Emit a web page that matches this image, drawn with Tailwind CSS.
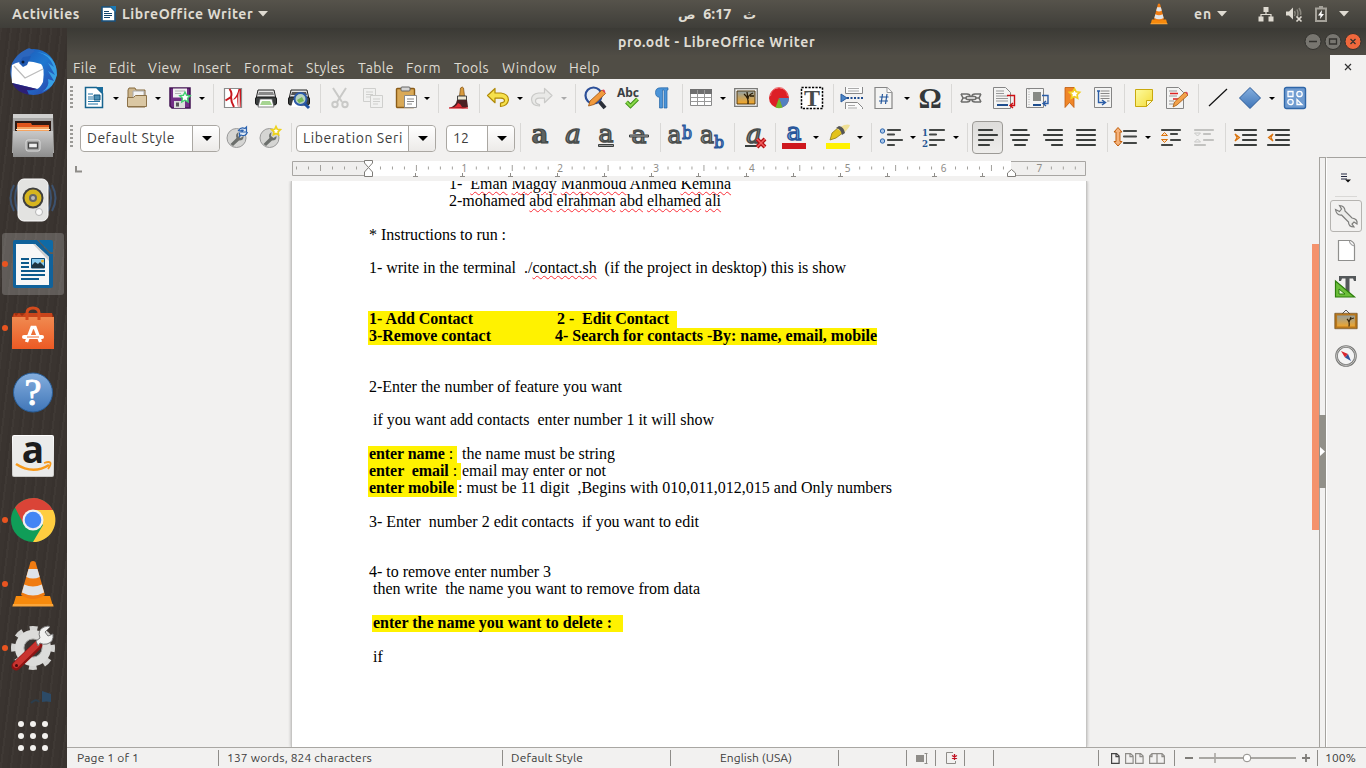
<!DOCTYPE html>
<html lang="en">
<head>
<meta charset="utf-8">
<title>pro.odt - LibreOffice Writer</title>
<script src="https://cdn.jsdelivr.net/npm/@tailwindcss/browser@4"></script>
</head>
<body class="w-[1366px] h-[768px] overflow-hidden bg-[#f2f1f0] font-['Ubuntu','Noto_Sans',sans-serif] text-[#3c3c3c] flex flex-col [&_svg]:overflow-visible">

<svg width="0" height="0" class="absolute">
  <defs>
    <linearGradient id="gray" x1="0" y1="0" x2="0" y2="1"><stop offset="0" stop-color="#fff"/><stop offset="1" stop-color="#c8c8c6"/></linearGradient>
    <linearGradient id="steel" x1="0" y1="0" x2="0" y2="1"><stop offset="0" stop-color="#c9c9c9"/><stop offset="1" stop-color="#8d8d8d"/></linearGradient>
    <linearGradient id="orange" x1="0" y1="0" x2="0" y2="1"><stop offset="0" stop-color="#f08a50"/><stop offset="1" stop-color="#ec5a24"/></linearGradient>
    <linearGradient id="blue" x1="0" y1="0" x2="0" y2="1"><stop offset="0" stop-color="#84aede"/><stop offset="1" stop-color="#4076b8"/></linearGradient>
    <linearGradient id="bird" x1="0" y1="0" x2="1" y2="1"><stop offset="0" stop-color="#1a4fb0"/><stop offset=".5" stop-color="#1f78d0"/><stop offset="1" stop-color="#2a3fa8"/></linearGradient>
    <linearGradient id="yellow" x1="0" y1="0" x2="1" y2="1"><stop offset="0" stop-color="#fdfba0"/><stop offset="1" stop-color="#f3dc3a"/></linearGradient>
    <linearGradient id="sunset" x1="0" y1="0" x2="0" y2="1"><stop offset="0" stop-color="#8fa0a8"/><stop offset="1" stop-color="#f6a623"/></linearGradient>
    <symbol id="cone" viewBox="0 0 48 48">
      <path d="M7 36h34l3 10H4z" fill="#f78a0c"/><path d="M4 44h40l.6 2.5H3.4z" fill="#fba63a"/>
      <path d="M21.500 2q2.500-2 5 0l9.500 33q-12 8-24 0z" fill="#f07c12"/>
      <path d="M19.500 9h9l2.200 8q-6.700 3-13.400 0z" fill="#dfe3e8"/><path d="M15.200 24.500q8.800 4 17.600 0l2.300 8q-11 6-22.200 0z" fill="#dfe3e8"/>
    </symbol>
    <symbol id="page" viewBox="0 0 24 24"><path d="M3 1.500h12l5 5v16H3z" fill="#f4f4f3" stroke="#858585" stroke-width="1.200"/><path d="M15 1.500v5h5" fill="#fff" stroke="#999"/></symbol>
  </defs>
</svg>

<!-- Top panel -->
<header class="h-7 shrink-0 bg-linear-to-b from-[#56534b] to-[#3f3e39] flex items-center text-[#dfdbd2] text-sm font-bold leading-none">
  <span class="ml-3 w-[68px] whitespace-pre" data-w="68">Activities</span>
  <svg class="ml-[21px] w-[15px] h-4" viewBox="0 0 15 16"><path d="M1 1h9l4 4v10H1z" fill="#fff" stroke="#17527f" stroke-width="1.600"/><path d="M9 0h6v6z" fill="#1b79b5"/><path d="M3 5.500h5M3 7.500h8M3 9.500h8M3 11.500h6" stroke="#11456e" stroke-width="1.100"/></svg>
  <span class="ml-[6px] w-[131px] whitespace-pre" data-w="131">LibreOffice Writer</span>
  <svg class="ml-[5px] w-[10px] h-[6px]" viewBox="0 0 10 6"><path d="M0 0h10L5 5.500z" fill="#dfdbd2"/></svg>
  <div class="ml-[410px] w-[78px] flex items-center justify-between font-['Ubuntu','DejaVu_Sans',sans-serif] text-[13px]" dir="ltr">
    <span>ص</span><span class="w-7 ml-[5px] whitespace-pre font-['Noto_Sans'] text-sm" data-w="28">6:17</span><span class="ml-[9px]">ث</span>
  </div>
  <svg class="ml-[393px] w-5 h-[22px]" viewBox="0 0 48 48" preserveAspectRatio="none"><use href="#cone"/></svg>
  <span class="ml-[25px] w-[18px] whitespace-pre" data-w="18">en</span>
  <svg class="ml-[5px] w-[10px] h-[6px]" viewBox="0 0 10 6"><path d="M0 0h10L5 5.500z" fill="#dfdbd2"/></svg>
  <svg class="ml-[31px] w-4 h-4" viewBox="0 0 16 16"><path d="M5.500 1h5v5h-5zM.5 10.500h5v5h-5zM10.500 10.500h5v5h-5z" fill="#dfdbd2"/><path d="M8 5v3.500M3 11V8.500h10V11" fill="none" stroke="#dfdbd2" stroke-width="1.200"/></svg>
  <svg class="ml-[11px] w-[18px] h-4" viewBox="0 0 18 16"><path d="M1 5.500h3l4-4v12l-4-4H1z" fill="#dfdbd2"/><path d="M9.500 5q1.500 2.500 0 5M12 3.500q2 4 0 7.500M14 2q2.500 4 1.500 7" fill="none" stroke="#8a877e" stroke-width="1.500"/><path d="M11.500 10.500l5 5m0-5l-5 5" stroke="#dfdbd2" stroke-width="1.700"/></svg>
  <svg class="ml-[12px] w-3 h-4" viewBox="0 0 12 16"><path d="M1 2.500h10v12.500H1z" fill="none" stroke="#a5a29a" stroke-width="2"/><path d="M4 0h4v2H4z" fill="#a5a29a"/><path d="M7 4L3 9.500h2.500L5 13l4-5H6.500z" fill="#fff"/></svg>
  <svg class="ml-[12px] w-[10px] h-[6px]" viewBox="0 0 10 6"><path d="M0 0h10L5 5.500z" fill="#dfdbd2"/></svg>
</header>

<div class="flex flex-1 min-h-0">
  <!-- Launcher -->
  <nav class="w-[67px] shrink-0 bg-[#3a3430] bg-[repeating-linear-gradient(97deg,rgba(255,255,240,0.025)_0_2px,transparent_2px_7px,rgba(0,0,0,0.04)_7px_10px)] flex flex-col items-center pt-3 pr-px">
    <div class="h-16 w-full flex justify-center items-center">
      <svg class="w-12 h-12" viewBox="0 0 48 48"><circle cx="24.500" cy="24" r="23" fill="url(#bird)"/><path d="M16 2q4-3 6-1l4 2q-8 5-9 13l-8 2q-6 6-7 11-2-12 4-18 4-6 10-9z" fill="#2c66bd"/><path d="M28 4q12 2 17 15l-6-4 7 12-7-4 6 10-6-2q2 8-6 13 12-4 15-17 0-20-20-23z" fill="#37a0e4"/><path d="M3 17q12-7 29-1 4 3 2 18-3 6-6 7L3 35q-1-10 0-18z" fill="#fff"/><path d="M5 18l11 12 18-9" fill="none" stroke="#bbb" stroke-width="1.200"/><path d="M3 35l25 6q-6 2-10 1l2 5Q7 44 3 35z" fill="#2c1f77"/><path d="M10 15l4-6 8-1-4 9-4 2z" fill="#215bb4"/><circle cx="14" cy="14" r="1.500" fill="#0a1c3a"/></svg>
    </div>
    <div class="h-16 w-full flex justify-center items-center">
      <svg class="w-12 h-12" viewBox="0 0 48 48"><path d="M4 2h40l1 39H3z" fill="#a9a9a8"/><path d="M4 2h40v4H4z" fill="#cfcfce"/><path d="M6 9h36v13H6z" fill="#2d1a14"/><path d="M8 11h14l1 2h17v8H8z" fill="#e0551c"/><path d="M8 15h32v5H8z" fill="#f5a35f"/><path d="M7 17h34v1H7z" fill="#ffe7cc"/><path d="M4 19h40v26H4z" fill="url(#steel)"/><rect x="17" y="28" width="14" height="11" rx="2" fill="#a0a0a0" stroke="#ddd"/><rect x="19.500" y="31" width="9" height="5" fill="#eee" stroke="#444" stroke-width="1.300"/></svg>
    </div>
    <div class="h-16 w-full flex justify-center items-center">
      <svg class="w-12 h-12" viewBox="0 0 48 48"><path d="M5 9q-7 13 0 26M9 9q-6 13 0 26M43 9q7 13 0 26M39 9q6 13 0 26" fill="none" stroke="#3c526f" stroke-width="2"/><rect x="9" y="3" width="30" height="42" rx="6" fill="#e3e3e1" stroke="#fafafa"/><circle cx="24" cy="22" r="10.500" fill="#3f3f3d"/><circle cx="24" cy="22" r="8.500" fill="#d6b51e"/><circle cx="24" cy="22" r="4" fill="#666"/><circle cx="24" cy="22" r="2" fill="#bbb"/><circle cx="30" cy="36" r="3.500" fill="#f9f9f9" stroke="#b4b4b4"/></svg>
    </div>
    <div class="h-16 w-full flex items-center">
      <div class="ml-[2px] w-[62px] h-[62px] shrink-0 rounded-[3px] bg-white/20 flex items-center">
        <span class="w-[6px] h-[6px] rounded-full bg-[#e95420] shrink-0"></span>
        <svg class="ml-px w-12 h-12" viewBox="0 0 48 48"><path d="M6 0h22l14 15v31q0 2-2 2H6q-2 0-2-2V2q0-2 2-2z" fill="#10629b"/><path d="M30 0h12q2 0 2 2v10q-3 1-5-2L32 3q-1-1-2-3z" fill="#0f6aa6"/><path d="M38 14h6v32q0 2-2 2h-6z" fill="#10629b"/><path d="M7 4h19l14 13v28H7z" fill="#f7f7f7"/><path d="M26 4v0l14 13v4L24 4z" fill="#ccc"/><path d="M12 19h8M12 23h8M12 27h8M12 31h24M12 35h24M12 39h18" stroke="#0d5a8c" stroke-width="1.900"/><path d="M22.500 18.500h13v9.500h-13z" fill="#8ccbee" stroke="#0c4c7a"/><path d="M23 28v-3l3-3 3 2 2-2 4 4v2z" fill="#1f3440"/><circle cx="33.500" cy="21" r="1.500" fill="#f0b429"/></svg>
      </div>
    </div>
    <div class="h-16 w-full flex items-center">
      <span class="ml-[2px] w-[6px] h-[6px] rounded-full bg-[#e95420]"></span>
      <svg class="ml-px w-12 h-12" viewBox="0 0 48 48"><path d="M5 9h38l2 4H3z" fill="#9c3010"/><path d="M5 9l2 3 3-3 3 3 3-3h27v5H4z" fill="#c8441b"/><path d="M3 13h42v32H3z" fill="url(#orange)"/><path d="M18 16V9q0-5 6-5t6 5v7" fill="none" stroke="#d34b1d" stroke-width="3"/><path d="M17.500 38L23 23.500h3L31.500 38" fill="none" stroke="#fff" stroke-width="3.400"/><path d="M15 33h18" stroke="#fff" stroke-width="4" stroke-linecap="round"/><path d="M18 33h12" stroke="#ef6a30" stroke-width="1"/></svg>
    </div>
    <div class="h-16 w-full flex justify-center items-center">
      <svg class="w-12 h-12" viewBox="0 0 48 48"><circle cx="24" cy="24.500" r="19.500" fill="url(#blue)" stroke="#285d97"/><text x="24" y="37" text-anchor="middle" font-family="Liberation Serif" font-size="38" fill="#fff" stroke="#fff" stroke-width="1">?</text></svg>
    </div>
    <div class="h-16 w-full flex justify-center items-center">
      <svg class="w-12 h-12" viewBox="0 0 48 48"><rect x="3" y="3" width="42" height="42" rx="2" fill="url(#gray)"/><rect x="4" y="4" width="40" height="40" rx="1" fill="#ebebea"/><text x="24" y="31" text-anchor="middle" font-family="Open Sans" font-weight="bold" font-size="37" fill="#1d1d1d">a</text><path d="M7 32q17 11 33 1" fill="none" stroke="#f79a1c" stroke-width="2.600"/><path d="M35 31q6-2 6.500 0t-2.500 6" fill="none" stroke="#f79a1c" stroke-width="1.800"/></svg>
    </div>
    <div class="h-16 w-full flex items-center">
      <span class="ml-[2px] w-[6px] h-[6px] rounded-full bg-[#e95420]"></span>
      <svg class="ml-px w-12 h-12" viewBox="0 0 48 48"><circle cx="24" cy="24" r="22" fill="#109d58"/><path d="M24 14h20a22 22 0 0 1-20 32l10-17z" fill="#ffcd40"/><path d="M24 14h19.700A22 22 0 0 0 6 11.500L15 29z" fill="#da4437"/><circle cx="24" cy="24" r="10.500" fill="#f1f1f1"/><circle cx="24" cy="24" r="8.300" fill="#4285f4"/></svg>
    </div>
    <div class="h-16 w-full flex items-center">
      <span class="ml-[2px] w-[6px] h-[6px] rounded-full bg-[#e95420]"></span>
      <svg class="ml-px w-12 h-12" viewBox="0 0 48 48"><use href="#cone"/></svg>
    </div>
    <div class="h-16 w-full flex items-center">
      <span class="ml-[2px] w-[6px] h-[6px] rounded-full bg-[#e95420]"></span>
      <svg class="ml-px w-12 h-12" viewBox="0 0 48 48"><circle cx="24" cy="24" r="19.500" fill="none" stroke="#d4d4d2" stroke-width="5" stroke-dasharray="7.800 7.515" stroke-dashoffset="3.900"/><circle cx="24" cy="24" r="13.500" fill="none" stroke="#dcdcda" stroke-width="9"/><circle cx="24" cy="24" r="9" fill="none" stroke="#9a9a98" stroke-width="1"/><path d="M7 42L29 21" stroke="#8d1413" stroke-width="9" stroke-linecap="round"/><path d="M7 41L28 20.500" stroke="#c93430" stroke-width="6" stroke-linecap="round"/><circle cx="7.500" cy="41.500" r="1.500" fill="#4a0d0c"/><path d="M27 17l4-3q-3-8 4-11 5-2 6 0l-5 5 3 4 5-2q1 8-6 10-4 1-7-1l-2 3z" fill="#f0f0ef" stroke="#777"/></svg>
    </div>
    <div class="h-[32px] w-full flex justify-center items-end"><svg class="w-12 h-7" viewBox="0 0 48 28"><path d="M33 7l9 3v8q-5-1-9 0z" fill="#2c4a66"/><path d="M22 19q5-5 8-1" fill="none" stroke="#2b3d4c" stroke-width="2"/></svg></div>
    <svg class="mt-[7px] w-[34px] h-[34px]" viewBox="0 0 34 34" fill="#f3f1ee"><circle cx="5" cy="5" r="3"/><circle cx="17" cy="5" r="3"/><circle cx="29" cy="5" r="3"/><circle cx="5" cy="17" r="3"/><circle cx="17" cy="17" r="3"/><circle cx="29" cy="17" r="3"/><circle cx="5" cy="29" r="3"/><circle cx="17" cy="29" r="3"/><circle cx="29" cy="29" r="3"/></svg>
  </nav>

  <!-- Window -->
  <main class="w-[1299px] flex flex-col">
    <div class="h-[27px] shrink-0 bg-linear-to-b from-[#3b3a35] to-[#4f4c45] flex items-center text-[#dfdbd2] font-bold text-[14px] leading-none">
      <span class="ml-[551px] w-[197px] whitespace-pre" data-w="197">pro.odt - LibreOffice Writer</span>
      <svg class="ml-[489px] w-[58px] h-[18px]" viewBox="0 0 58 18"><circle cx="9" cy="8.500" r="8" fill="#787670" stroke="#33322e"/><circle cx="29" cy="8.500" r="8" fill="#787670" stroke="#33322e"/><circle cx="49" cy="8.500" r="8" fill="#f0683c" stroke="#33322e"/><path d="M5 8.500h8M25.500 6h7v5h-7zM46.500 6l5 5m0-5l-5 5" fill="none" stroke="#33322e" stroke-width="1.300"/></svg>
    </div>
    <div class="h-6 shrink-0 bg-[#504d45] flex items-stretch text-[#dfdbd2] text-sm leading-[26px] whitespace-pre">
      <span class="ml-[6px] w-6" data-w="24">File</span><span class="ml-3 w-[27px]" data-w="27">Edit</span><span class="ml-3 w-[33px]" data-w="33">View</span><span class="ml-3 w-[38px]" data-w="38">Insert</span><span class="ml-[13px] w-[50px]" data-w="50">Format</span><span class="ml-3 w-[39px]" data-w="39">Styles</span><span class="ml-[13px] w-9" data-w="36">Table</span><span class="ml-3 w-[35px]" data-w="35">Form</span><span class="ml-[13px] w-[35px]" data-w="35">Tools</span><span class="ml-[13px] w-[55px]" data-w="55">Window</span><span class="ml-3 w-[31px]" data-w="31">Help</span>
      <div class="ml-auto w-9 bg-[#f2f1f0] flex items-center justify-center"><svg class="w-[6px] h-[6px]" viewBox="0 0 6 6"><path d="M0 0l6 6m0-6L0 6" stroke="#333" stroke-width="1.200"/></svg></div>
    </div>

    <!-- Standard toolbar -->
    <div class="h-[38px] shrink-0 flex items-center [&>svg]:shrink-0 [&>i]:shrink-0 [&>b]:shrink-0">
      <svg class="ml-[3px] w-[3px] h-6" viewBox="0 0 3 24"><path d="M1.500 0v24" stroke="#9b9a97" stroke-width="3" stroke-dasharray="2 2"/></svg>
      <svg class="ml-[9px] w-6 h-6" viewBox="0 0 24 24"><path d="M3.500 1.500h11l6 6v14h-17z" fill="#fff" stroke="#17648f" stroke-width="1.500"/><path d="M14 1h7v7z" fill="#1b6d9d"/><path d="M6 8h5M6 11h5M6 13h5M6 15.500h12M6 18h10" stroke="#2374a5" stroke-width="1.200"/><path d="M12 9h6v5h-6z" fill="#4d8fb4" stroke="#12547c"/></svg>
      <i class="ml-[7px] w-0 h-0 border-x-[3px] border-x-transparent border-t-[3px] border-t-black"></i>
      <svg class="ml-[6px] w-6 h-6" viewBox="0 0 24 24"><path d="M3 4l1-2h6l1 2h9v17H3z" fill="#cdb68d" stroke="#866b3e"/><path d="M8 5h11v8H8z" fill="#f4f4f4" stroke="#aaa"/><path d="M2.500 11.500h6l2-2h11v11h-19z" fill="#dac7a3" stroke="#8c7248"/></svg>
      <i class="ml-[6px] w-0 h-0 border-x-[3px] border-x-transparent border-t-[3px] border-t-black"></i>
      <svg class="ml-[7px] w-6 h-6" viewBox="0 0 24 24"><path d="M2 2h20v20H4l-2-2z" fill="#722f86" stroke="#431452" stroke-width="1.500"/><path d="M5 2.500h14v9H5z" fill="#f1f1f1"/><path d="M7 5h10M7 7.500h6" stroke="#b4b4b4"/><path d="M6 15h11v7H6z" fill="#ddd"/><path d="M8 16.500h3v4H8z" fill="#555"/><path d="M17 6l1.600 3.300 3.600.5-2.600 2.500.6 3.600-3.200-1.700-3.200 1.700.6-3.600-2.600-2.500 3.600-.5z" fill="#fff" stroke="#41d070" stroke-width="1.400"/></svg>
      <i class="ml-[7px] w-0 h-0 border-x-[3px] border-x-transparent border-t-[3px] border-t-black"></i>
      <b class="ml-2 w-px h-[29px] bg-[#d9d8d6]"></b>
      <svg class="ml-[7px] w-6 h-6" viewBox="0 0 24 24"><path d="M3.500 2.500h17v19h-17z" fill="#fff" stroke="#8b8b8b" stroke-width="1.200"/><path d="M8.500 3q3 4 1.500 8L4.500 14.500M10 11q0 5 3 10" fill="none" stroke="#c8171e" stroke-width="2"/><path d="M12.500 13q4-4 5-10h2.500v18h-3q-1.500-5-1-10-1.500 2-3.500 3z" fill="#c8171e"/><path d="M17 21q-1.500-9 1.500-17l1 17z" fill="#e9b5b6"/></svg>
      <svg class="ml-[9px] w-6 h-6" viewBox="0 0 24 24"><path d="M4 4h16l2 9H2z" fill="#e4e4e4" stroke="#222"/><path d="M5 6h14l1 3H4z" fill="#888"/><rect x="1.500" y="11" width="21" height="8" rx="2" fill="#3b3f3f" stroke="#161616"/><path d="M6 13h12l2 8H4z" fill="#fff" stroke="#555" stroke-width=".7"/><path d="M8 15h8l2 4H6z" fill="#a6d491"/></svg>
      <svg class="ml-[9px] w-6 h-6" viewBox="0 0 24 24"><path d="M4 4h16l2 9H2z" fill="#e4e4e4" stroke="#222"/><path d="M5 6h14l1 3H4z" fill="#555"/><rect x="1.500" y="11" width="21" height="8" rx="2" fill="#3b3f3f" stroke="#161616"/><path d="M4 21l2-7h8v7z" fill="#fff"/><path d="M18 18l4 4" stroke="#1c4fa0" stroke-width="3"/><circle cx="13.500" cy="13" r="6" fill="#b9d3c2" stroke="#2c5aa8" stroke-width="2"/><path d="M10 14l5-3 2 4-5 2z" fill="#76b956"/></svg>
      <b class="ml-[9px] w-px h-[29px] bg-[#d9d8d6]"></b>
      <svg class="ml-[7px] w-6 h-6" viewBox="0 0 24 24" fill="none" stroke="#c9c9c7"><path d="M5 2l9 14M18 2L9 16" stroke-width="2"/><circle cx="7" cy="18.500" r="2.700" stroke-width="2"/><circle cx="17" cy="18.500" r="2.700" stroke-width="2"/></svg>
      <svg class="ml-[9px] w-6 h-6" viewBox="0 0 24 24" fill="#f1f1f0" stroke="#cfcfcd"><path d="M2.500 2.500h12v13h-12z"/><path d="M5 6h7M5 8.500h7M5 11h4"/><path d="M9.500 9.500h12v12h-12z"/><path d="M12 13h7M12 15.500h7M12 18h5"/></svg>
      <svg class="ml-[9px] w-6 h-6" viewBox="0 0 24 24"><rect x="2.500" y="2.500" width="18" height="19" rx="1" fill="#d9a957" stroke="#8b5c18" stroke-width="1.400"/><rect x="7" y="1" width="9" height="4" rx="1" fill="#d5d5d5" stroke="#666"/><path d="M10.500 9.500h12v12h-12z" fill="#fff" stroke="#888"/><path d="M13 13h7M13 15.500h7M13 18h5" stroke="#888"/></svg>
      <i class="ml-[6px] w-0 h-0 border-x-[3px] border-x-transparent border-t-[3px] border-t-black"></i>
      <b class="ml-2 w-px h-[29px] bg-[#d9d8d6]"></b>
      <svg class="ml-[9px] w-6 h-6" viewBox="0 0 24 24"><path d="M12.500 2q2-2 3 0l1 8h-5z" fill="#d89b3e" stroke="#7c4f12" stroke-width=".7"/><path d="M9.500 10h9v4h-9z" fill="#eee8d5" stroke="#444"/><path d="M9 14h10l1 7q-4 2-7 1H1q7-2 8-8z" fill="#4b2022"/><path d="M10 17q3 1 4 4l-13 1q7 0 9-5z" fill="#e42b33"/><path d="M1 22h19" stroke="#d91e28" stroke-width="1.200"/></svg>
      <b class="ml-[7px] w-px h-[29px] bg-[#d9d8d6]"></b>
      <svg class="ml-[6px] w-6 h-6" viewBox="0 0 24 24"><path d="M1.500 9.500l7.500-7v4.500h6q7.500 1 7.500 7-1 6-8 6.500V17q4-.5 4-2.500 0-2-3.500-2.300H9v4.500z" fill="#f6e14c" stroke="#b08a08" stroke-width="1.200" stroke-linejoin="round"/></svg>
      <i class="ml-[7px] w-0 h-0 border-x-[3px] border-x-transparent border-t-[3px] border-t-black"></i>
      <svg class="ml-[7px] w-6 h-6" viewBox="0 0 24 24"><path d="M22 9.500l-7.500-7v4.500h-6Q1.500 8 1.500 13.500q.5 6.500 8 6.500v-1.500q-4-.5-4-3.500 0-2.500 3.500-2.800h5.500v4.500z" fill="#e9e9e7" stroke="#cacac8" stroke-width="1.200" stroke-linejoin="round"/></svg>
      <i class="ml-[7px] w-0 h-0 border-x-[3px] border-x-transparent border-t-[3px] border-t-[#aaa]"></i>
      <b class="ml-2 w-px h-[29px] bg-[#d9d8d6]"></b>
      <svg class="ml-[7px] w-6 h-6" viewBox="0 0 24 24"><path d="M16 15l6 7" stroke="#2b2f38" stroke-width="4"/><circle cx="10.500" cy="9.500" r="8" fill="#e7ecf2" stroke="#2c4f98" stroke-width="2.200"/><path d="M5.500 20l1.500-5L19 4l3.500 3.500L11 18.500z" fill="#f19a3d" stroke="#9d5410" stroke-width=".8"/><path d="M19 4q3-2 3.500 3.500z" fill="#e2445c"/></svg>
      <svg class="ml-[9px] w-6 h-6" viewBox="0 0 24 24"><text x="12" y="11" text-anchor="middle" textLength="22" font-family="Noto Sans" font-weight="bold" font-size="12" fill="#3b3f44">Abc</text><path d="M10.500 16l4 4 7-7" fill="none" stroke="#3f8f16" stroke-width="4"/><path d="M10.500 16l4 4 7-7" fill="none" stroke="#8ad94a" stroke-width="2"/></svg>
      <svg class="ml-[9px] w-6 h-6" viewBox="0 0 24 24"><path d="M6.500 6.500q0-4.700 5-4.700H19V4h-1v18h-3V4h-1.500v18h-3V11.300q-4-.3-4-4.800z" fill="#4b94d8" stroke="#2566a6" stroke-width=".7"/></svg>
      <b class="ml-[9px] w-px h-[29px] bg-[#d9d8d6]"></b>
      <svg class="ml-[6px] w-6 h-6" viewBox="0 0 24 24"><path d="M1.500 3.500h21v16h-21z" fill="#fff" stroke="#8a8a8a"/><path d="M1 3h22v5H1z" fill="#6f6f6f"/><path d="M1.500 11.500h21M1.500 15.500h21M8.500 4v15.500M15.500 4v15.500" stroke="#999"/></svg>
      <i class="ml-[7px] w-0 h-0 border-x-[3px] border-x-transparent border-t-[3px] border-t-black"></i>
      <svg class="ml-2 w-6 h-6" viewBox="0 0 24 24"><path d="M.7 2.700h22.600v17.600H.7z" fill="#f5f5f4" stroke="#7b7b79" stroke-width="1.300"/><path d="M3 5h18v13H3z" fill="url(#sunset)" stroke="#553a10"/><path d="M14 18q1-6-4-10m4 5q0-4 5-6m-5 6l-1-7m3 4h4" fill="none" stroke="#2a1c06" stroke-width="1.300"/></svg>
      <svg class="ml-[9px] w-6 h-6" viewBox="0 0 24 24"><circle cx="12" cy="12" r="10" fill="#dd2026"/><path d="M12 12h10a10 10 0 0 1-7 9.500z" fill="#5380c0"/><path d="M12 12l3.500 9.500a10 10 0 0 1-7 0z" fill="#73b72b"/><path d="M3.500 10a8.500 8.500 0 0 1 17 0" fill="none" stroke="#f06a6c" stroke-width="1"/></svg>
      <svg class="ml-[9px] w-6 h-6" viewBox="0 0 24 24"><path d="M1.500 1.500h21v21h-21z" fill="#fff" stroke="#000" stroke-width="1.500" stroke-dasharray="2.200 1.300"/><text x="12" y="20" text-anchor="middle" font-family="Liberation Serif" font-weight="bold" font-size="24" fill="#484c4c">T</text></svg>
      <b class="ml-[9px] w-px h-[29px] bg-[#d9d8d6]"></b>
      <svg class="ml-[6px] w-6 h-6" viewBox="0 0 24 24"><path d="M5.500 1v6.500h17V1M5.500 23v-6.500h12l5 5V23" fill="#fafafa" stroke="#888"/><path d="M8 2.500h11M8 5h11M8 19.500h7M8 22h9" stroke="#aaa"/><path d="M1 8l6 4-6 4z" fill="#4d86c8" stroke="#285a9c"/><path d="M7 12h16" stroke="#204d90" stroke-width="2" stroke-dasharray="2 1.500"/></svg>
      <svg class="ml-2 w-6 h-6" viewBox="0 0 24 24"><use href="#page"/><path d="M10.500 8L9 18M15 8l-1.500 10M7.500 11h9M7 15h9" stroke="#23569c" stroke-width="1.200"/></svg>
      <i class="ml-2 w-0 h-0 border-x-[3px] border-x-transparent border-t-[3px] border-t-black"></i>
      <svg class="ml-2 w-6 h-6" viewBox="0 0 24 24"><text x="12" y="21.500" text-anchor="middle" font-family="Liberation Serif" font-weight="bold" font-size="29" fill="#34383a">Ω</text></svg>
      <b class="ml-[9px] w-px h-[29px] bg-[#d9d8d6]"></b>
      <svg class="ml-[7px] w-6 h-6" viewBox="0 0 24 24" fill="none" stroke="#6e6e6c" stroke-width="1.600"><path d="M2 8h6q3 0 3 2.500M2 16h6q3 0 3-2.500M22 8h-6q-3 0-3 2.500M22 16h-6q-3 0-3-2.500M3 12h5M16 12h5M2 8l2 4-2 4M22 8l-2 4 2 4"/><rect x="7" y="10.500" width="10" height="3" rx="1.500"/></svg>
      <svg class="ml-[9px] w-6 h-6" viewBox="0 0 24 24"><path d="M1.500 1.500h12l5 5v16h-17z" fill="#f4f4f3" stroke="#858585"/><path d="M4 5h8M4 7.500h8M4 10h12M4 12.500h12M4 15h12" stroke="#999"/><path d="M5 18h11v2H5z" fill="#1f4e8e"/><path d="M15 9.500h7.500v10H18m3-2.500l-3 2.500 3 2.500" fill="none" stroke="#cc1014" stroke-width="1.400"/></svg>
      <svg class="ml-[9px] w-6 h-6" viewBox="0 0 24 24"><path d="M1.500 2.500h17v19h-17z" fill="#f4f4f3" stroke="#858585"/><path d="M4 3v18" stroke="#aaa" stroke-dasharray="1 1.500"/><path d="M8 6h8v9H8z" fill="#888b86"/><path d="M8 18h8v2H8z" fill="#1f4e8e"/><path d="M17 9.500h6v8h-5m3-2.500l-3 2.500 3 2.500" fill="none" stroke="#2b5da6" stroke-width="1.400"/></svg>
      <svg class="ml-[10px] w-6 h-6" viewBox="0 0 24 24"><path d="M6 1.500h9v20l-4.500-5-4.500 5z" fill="#f08628" stroke="#bf5a0d" stroke-width=".8"/><path d="M15.500 2.500l1.600 3.200 3.600.5-2.600 2.500.6 3.600-3.200-1.700-3.200 1.700.6-3.600-2.600-2.500 3.600-.5z" fill="#fff" stroke="#f2ce1c" stroke-width="1.600"/></svg>
      <svg class="ml-2 w-6 h-6" viewBox="0 0 24 24"><path d="M3.500 1.500h17v20h-17z" fill="#f4f4f3" stroke="#858585"/><path d="M9.500 5h9M9.500 7.500h9M9.500 10h9M9.500 12.500h9M16 15h2.500" stroke="#888"/><path d="M6 5h3M7.500 5v11.500H14m-3-2.500l3.500 2.500-3.500 2.500" fill="none" stroke="#2b5da6" stroke-width="1.400"/></svg>
      <b class="ml-[9px] w-px h-[29px] bg-[#d9d8d6]"></b>
      <svg class="ml-[7px] w-6 h-6" viewBox="0 0 24 24"><path d="M3.500 3.500h17v11l-6 6h-11z" fill="url(#yellow)" stroke="#c9a90e"/><path d="M14.500 20.500v-6h6z" fill="#fffcc8" stroke="#c9a90e"/></svg>
      <svg class="ml-[9px] w-6 h-6" viewBox="0 0 24 24"><path d="M1.500 1.500h12l5 5v16h-17z" fill="#f4f4f3" stroke="#858585"/><path d="M4 5h8M4 10h8M4 15h5M4 18h5" stroke="#999"/><path d="M5 7.500h8M8 13h6" stroke="#d22" stroke-width="1.300"/><path d="M8 21l1.500-5L20 6l3 3-11 10z" fill="#f2a14a" stroke="#a3590f" stroke-width=".8"/><path d="M20 6q3-1 3 3z" fill="#e2445c"/></svg>
      <b class="ml-[9px] w-px h-[29px] bg-[#d9d8d6]"></b>
      <svg class="ml-[7px] w-6 h-6" viewBox="0 0 24 24"><path d="M3 20L21 3" stroke="#111" stroke-width="1.200"/></svg>
      <svg class="ml-2 w-6 h-6" viewBox="0 0 24 24"><path d="M12 1.500L22.500 12 12 22.500 1.500 12z" fill="url(#blue)" stroke="#2a5a98"/></svg>
      <i class="ml-[7px] w-0 h-0 border-x-[3px] border-x-transparent border-t-[3px] border-t-black"></i>
      <svg class="ml-2 w-6 h-6" viewBox="0 0 24 24"><rect x="1.500" y="1.500" width="21" height="21" rx="2" fill="#6f9bd0" stroke="#2f66a8" stroke-width="1.400"/><g fill="#7fa9dc" stroke="#fff" stroke-width="1.300"><path d="M5 5.500h5v5H5z"/><circle cx="16.500" cy="8" r="2.700"/><circle cx="7.500" cy="16" r="2.700"/><path d="M14 13.500v5h5z"/></g></svg>
    </div>

    <!-- Formatting toolbar -->
    <div class="h-10 shrink-0 flex items-center [&>svg]:shrink-0 [&>i]:shrink-0 [&>b]:shrink-0">
      <svg class="ml-[3px] w-[3px] h-6" viewBox="0 0 3 24"><path d="M1.500 0v24" stroke="#9b9a97" stroke-width="3" stroke-dasharray="2 2"/></svg>
      <div class="ml-[7px] mt-[2px] w-[140px] h-[27px] rounded border border-[#aaa7a2] bg-white flex items-center shrink-0 text-sm">
        <span class="ml-[6px] w-[88px] whitespace-pre leading-none" data-w="88">Default Style</span>
        <span class="ml-auto w-[27px] h-full border-l border-[#aaa7a2] rounded-r bg-linear-to-b from-white to-[#eceae8] flex items-center justify-center pl-px"><i class="w-0 h-0 border-x-[5px] border-x-transparent border-t-[5px] border-t-black"></i></span>
      </div>
      <svg class="ml-[5px] w-6 h-6" viewBox="0 0 24 24"><circle cx="11.500" cy="13" r="9.500" fill="#d5d5d3" stroke="#999"/><path d="M5.500 19l6-6q-1.500-4 2-6l-.5 4 2.500 2 3-2q.5 4.500-4.500 4.500l-6 5.500z" fill="#6c6f6c"/><path d="M13.500 5.500q2.500-4 6.500-2l1.500-1.500v5h-5l1.700-1.700q-1.700-.8-2.700.7zM22.500 7q-2 5-6.500 3l-1.500 1.500v-4" fill="#dfe9f5" stroke="#2b62ae" stroke-width="1.200"/></svg>
      <svg class="ml-[9px] w-6 h-6" viewBox="0 0 24 24"><circle cx="11.500" cy="13" r="9.500" fill="#d5d5d3" stroke="#999"/><path d="M5.500 19l6-6q-1.500-4 2-6l-.5 4 2.500 2 3-2q.5 4.500-4.500 4.500l-6 5.500z" fill="#6c6f6c"/><path d="M18 1.500l1.300 2.800 3 .4-2.200 2.100.5 3-2.600-1.400-2.600 1.400.5-3-2.200-2.100 3-.4z" fill="#fff" stroke="#eed31c" stroke-width="1.700"/></svg>
      <b class="ml-[9px] w-px h-[29px] bg-[#d9d8d6]"></b>
      <div class="ml-1 mt-[2px] w-[140px] h-[27px] rounded border border-[#aaa7a2] bg-white flex items-center shrink-0 text-sm">
        <span class="ml-[6px] w-[100px] whitespace-pre leading-none" data-w="100">Liberation Seri</span>
        <span class="ml-auto w-[27px] h-full border-l border-[#aaa7a2] rounded-r bg-linear-to-b from-white to-[#eceae8] flex items-center justify-center pl-px"><i class="w-0 h-0 border-x-[5px] border-x-transparent border-t-[5px] border-t-black"></i></span>
      </div>
      <div class="ml-[10px] mt-[2px] w-[69px] h-[27px] rounded border border-[#aaa7a2] bg-white flex items-center shrink-0 text-sm">
        <span class="ml-[6px] w-[15px] whitespace-pre leading-none" data-w="16">12</span>
        <span class="ml-auto w-[27px] h-full border-l border-[#aaa7a2] rounded-r bg-linear-to-b from-white to-[#eceae8] flex items-center justify-center pl-px"><i class="w-0 h-0 border-x-[5px] border-x-transparent border-t-[5px] border-t-black"></i></span>
      </div>
      <b class="ml-[5px] w-px h-[29px] bg-[#d9d8d6]"></b>
      <svg class="ml-[7px] w-6 h-6" viewBox="0 0 24 24"><text x="12" y="18" text-anchor="middle" font-family="DejaVu Serif" font-weight="bold" font-size="26" fill="#5e6361" stroke="#3f4442" stroke-width="1.100">a</text></svg>
      <svg class="ml-[9px] w-6 h-6" viewBox="0 0 24 24"><text x="12" y="18" text-anchor="middle" font-family="DejaVu Serif" font-style="italic" font-size="26" fill="#8c908e" stroke="#4a4e4d" stroke-width="1.600">a</text></svg>
      <svg class="ml-[9px] w-6 h-6" viewBox="0 0 24 24"><text x="12" y="17" text-anchor="middle" font-family="DejaVu Serif" font-size="25" fill="#8c908e" stroke="#4a4e4d" stroke-width="1.500">a</text><path d="M4.500 19.500h15v2h-15z" fill="#999" stroke="#3b3f3e"/></svg>
      <svg class="ml-[9px] w-6 h-6" viewBox="0 0 24 24"><text x="12" y="18" text-anchor="middle" font-family="DejaVu Serif" font-size="25" fill="#8c908e" stroke="#4a4e4d" stroke-width="1.500">a</text><path d="M2.500 10h19v2h-19z" fill="#aaa" stroke="#3b3f3e"/></svg>
      <b class="ml-[9px] w-px h-[29px] bg-[#d9d8d6]"></b>
      <svg class="ml-[7px] w-6 h-6" viewBox="0 0 24 24"><text x="-.5" y="18" font-family="DejaVu Serif" font-size="25" fill="#9a9e9c" stroke="#4a4e4d" stroke-width="1.400" textLength="14" lengthAdjust="spacingAndGlyphs">a</text><text x="14" y="14" font-family="DejaVu Serif" font-size="18" fill="#7fa9dc" stroke="#28569a" stroke-width="1.200" textLength="10" lengthAdjust="spacingAndGlyphs">b</text></svg>
      <svg class="ml-2 w-6 h-6" viewBox="0 0 24 24"><text x="0" y="17.500" font-family="DejaVu Serif" font-size="25" fill="#9a9e9c" stroke="#4a4e4d" stroke-width="1.400" textLength="14" lengthAdjust="spacingAndGlyphs">a</text><text x="14" y="22.500" font-family="DejaVu Serif" font-size="17" fill="#7fa9dc" stroke="#28569a" stroke-width="1.200" textLength="10" lengthAdjust="spacingAndGlyphs">b</text></svg>
      <b class="ml-[10px] w-px h-[29px] bg-[#d9d8d6]"></b>
      <svg class="ml-[9px] w-6 h-6" viewBox="0 0 24 24"><text x="10" y="18" text-anchor="middle" font-family="DejaVu Serif" font-style="italic" font-size="26" fill="#9a9e9c" stroke="#4a4e4d" stroke-width="1.600">a</text><path d="M1 21h12" stroke="#3b3f3e" stroke-width="2"/><path d="M13 14l8 8m0-8l-8 8" stroke="#b30f12" stroke-width="4"/><path d="M13 14l8 8m0-8l-8 8" stroke="#f25a5a" stroke-width="1.500"/></svg>
      <b class="ml-[7px] w-px h-[29px] bg-[#d9d8d6]"></b>
      <svg class="ml-[6px] w-6 h-6" viewBox="0 0 24 24"><text x="12" y="14.500" text-anchor="middle" font-family="DejaVu Serif" font-size="25" fill="#8ab1e0" stroke="#28569a" stroke-width="1.400">a</text><path d="M0 18h24v6H0z" fill="#ce181e"/></svg>
      <i class="ml-[7px] w-0 h-0 border-x-[3px] border-x-transparent border-t-[3px] border-t-black"></i>
      <svg class="ml-[7px] w-6 h-6" viewBox="0 0 24 24"><path d="M0 18h24v6H0z" fill="#fff200"/><path d="M4 15l2-7 7-6 5 5-8 6z" fill="#e3c21c" stroke="#8d7a1a" stroke-width=".8"/><path d="M11 4l7-4q4-1 6 0-1 3-6 8z" fill="#f0e096"/><path d="M10 3q5 1 6 7l3-2q-1-6-6-7z" fill="#555"/></svg>
      <i class="ml-[7px] w-0 h-0 border-x-[3px] border-x-transparent border-t-[3px] border-t-black"></i>
      <b class="ml-2 w-px h-[29px] bg-[#d9d8d6]"></b>
      <svg class="ml-[7px] w-6 h-6" viewBox="0 0 24 24"><circle cx="3.500" cy="6" r="2.200" fill="#a7c4e8" stroke="#2d66ad"/><circle cx="3.500" cy="16" r="2.200" fill="#a7c4e8" stroke="#2d66ad"/><path d="M9 5h12M9 9.500h6M9 15h14M9 20h6" stroke="#444745" stroke-width="2.200" stroke-linecap="round"/></svg>
      <i class="ml-[7px] w-0 h-0 border-x-[3px] border-x-transparent border-t-[3px] border-t-black"></i>
      <svg class="ml-[5px] w-6 h-6" viewBox="0 0 24 24"><text x="1" y="10.500" font-family="DejaVu Serif" font-weight="bold" font-size="10" textLength="6" lengthAdjust="spacingAndGlyphs" fill="#235594">1</text><text x="1" y="22" font-family="DejaVu Serif" font-weight="bold" font-size="10" textLength="6" lengthAdjust="spacingAndGlyphs" fill="#235594">2</text><path d="M9 5h14M9 9.500h6M9 15h14M9 20h6" stroke="#444745" stroke-width="2.200" stroke-linecap="round"/></svg>
      <i class="ml-2 w-0 h-0 border-x-[3px] border-x-transparent border-t-[3px] border-t-black"></i>
      <b class="ml-2 w-px h-[29px] bg-[#d9d8d6]"></b>
      <div class="ml-1 w-[31px] h-[33px] shrink-0 rounded border border-[#9c9a96] bg-linear-to-b from-[#dddcda] to-[#eeedeb] flex items-center justify-center"><svg class="w-6 h-6" viewBox="0 0 24 24"><path d="M3 5h13M3 10h18M3 15h14M3 20h10" stroke="#3a3d3b" stroke-width="2.200" stroke-linecap="round"/></svg></div>
      <svg class="ml-[5px] w-6 h-6" viewBox="0 0 24 24"><path d="M5.500 5h13M3 10h18M5 15h14M7 20h10" stroke="#3a3d3b" stroke-width="2.200" stroke-linecap="round"/></svg>
      <svg class="ml-[9px] w-6 h-6" viewBox="0 0 24 24"><path d="M7 5h14M3 10h18M5 15h16M11 20h10" stroke="#3a3d3b" stroke-width="2.200" stroke-linecap="round"/></svg>
      <svg class="ml-[9px] w-6 h-6" viewBox="0 0 24 24"><path d="M3 5h18M3 10h18M3 15h18M3 20h18" stroke="#3a3d3b" stroke-width="2.200" stroke-linecap="round"/></svg>
      <b class="ml-[9px] w-px h-[29px] bg-[#d9d8d6]"></b>
      <svg class="ml-[5px] w-6 h-6" viewBox="0 0 24 24"><path d="M5 2.500l4 4.500H7v9.500h2L5 21l-4-4.500h2V7H1z" fill="#f5b27a" stroke="#c25e0b"/><path d="M11 6h12M11 11.500h12M11 18h12" stroke="#444745" stroke-width="2.200" stroke-linecap="round"/></svg>
      <i class="ml-2 w-0 h-0 border-x-[3px] border-x-transparent border-t-[3px] border-t-black"></i>
      <svg class="ml-2 w-6 h-6" viewBox="0 0 24 24"><path d="M3 5h18M12 9h6M12 15h9M3 20h10" stroke="#444745" stroke-width="2.200" stroke-linecap="round"/><path d="M5.500 7.500l3 3h-6zM5.500 17.500l3-3h-6z" fill="#fbd9bb" stroke="#d9740f"/></svg>
      <svg class="ml-[9px] w-6 h-6" viewBox="0 0 24 24"><path d="M3 5h18M12 9h6M12 15h9M3 20h10" stroke="#c2c2c0" stroke-width="2.200" stroke-linecap="round"/><path d="M5.500 11l3-3h-6zM5.500 14l3 3h-6z" fill="#eee" stroke="#c8c8c6"/></svg>
      <b class="ml-[9px] w-px h-[29px] bg-[#d9d8d6]"></b>
      <svg class="ml-[7px] w-6 h-6" viewBox="0 0 24 24"><path d="M2 5h21M10 10h13M10 15h13M2 20h21" stroke="#3a3d3b" stroke-width="2.200" stroke-linecap="round"/><path d="M2 9l4.500 3.500L2 16l2-3.500z" fill="#fbd9bb" stroke="#d9740f" stroke-width="1.200"/></svg>
      <svg class="ml-[9px] w-6 h-6" viewBox="0 0 24 24"><path d="M2 5h21M10 10h13M10 15h13M2 20h21" stroke="#3a3d3b" stroke-width="2.200" stroke-linecap="round"/><path d="M7 9l-4.500 3.500L7 16l-2-3.500z" fill="#fbd9bb" stroke="#d9740f" stroke-width="1.200"/></svg>
    </div>

    <div class="flex flex-1 min-h-0">
      <!-- Editing area -->
      <div class="w-[1252px] flex flex-col">
        <div class="h-6 shrink-0 flex">
          <svg class="ml-2 mt-[9px] w-[7px] h-[7px]" viewBox="0 0 7 7"><path d="M1 0v5.500h6" fill="none" stroke="#8f8d89" stroke-width="2"/></svg>
          <svg id="ruler" class="ml-[210px] mt-[2px] w-[795px] h-5 font-['Noto_Sans'] text-[10px]" viewBox="0 0 795 20">
            <path d="M76 2h643v15H76z" fill="#fff"/>
            <path d="M76 2.500H.5v14H76M719 2.500h74.500v14H719" fill="#f0efee" stroke="#a8a6a3"/>
          </svg>
        </div>
        <div class="flex-1 min-h-0 flex overflow-hidden">
          <article class="ml-[224px] w-[796px] bg-white border-x border-[#c6c5c3] shadow-[0_0_3px_rgba(0,0,0,0.3)] overflow-hidden">
            <div class="-mt-[5px] pl-[76px] font-['Liberation_Serif'] text-base leading-[16.890px] text-black [&_span]:whitespace-pre [&>div]:h-[16.890px] [&>div]:flex [&_u]:decoration-wavy [&_u]:decoration-red-500 [&_u]:decoration-[1px] [&_u]:underline-offset-[2px] [&_mark]:bg-[#fff200] [&_mark]:text-black [&_mark]:block [&_mark]:font-bold">
              <div class="pl-[81px]"><span data-w="282">1-  <u>Eman</u> <u>Magdy</u> <u>Mahmoud</u> Ahmed <u>Kemina</u></span></div>
              <div class="pl-[81px]"><span data-w="272">2-mohamed <u>abd</u> <u>elrahman</u> <u>abd</u> <u>elhamed</u> <u>ali</u></span></div>
              <div></div>
              <div class="pl-px"><span data-w="137">* Instructions to run :</span></div>
              <div></div>
              <div class="pl-px"><span data-w="477">1- write in the terminal  ./<u>contact.sh</u>  (if the project in desktop) this is show</span></div>
              <div></div>
              <div></div>
              <div><mark class="w-[189px] pl-px"><span data-w="104">1- Add Contact</span></mark><mark class="w-[120px]"><span data-w="112">2 -  Edit Contact</span></mark></div>
              <div><mark class="w-[187px] pl-px"><span data-w="122">3-Remove contact</span></mark><mark class="w-[322px]"><span data-w="322">4- Search for contacts -By: name, email, mobile</span></mark></div>
              <div></div>
              <div></div>
              <div class="pl-px"><span data-w="253">2-Enter the number of feature you want</span></div>
              <div></div>
              <div class="pl-[5px]"><span data-w="341">if you want add contacts  enter number 1 it will show</span></div>
              <div></div>
              <div><mark class="w-[89px] pl-px"><span data-w="84">enter name <span class="font-normal">:</span></span></mark><span class="ml-[5px]" data-w="153">the name must be string</span></div>
              <div><mark class="w-[93px] pl-px"><span data-w="88">enter  email <span class="font-normal">:</span></span></mark><span class="ml-px" data-w="144">email may enter or not</span></div>
              <div><mark class="w-[89px] pl-px"><span data-w="85">enter mobile</span></mark><span class="ml-px" data-w="434">: must be 11 digit  ,Begins with 010,011,012,015 and Only numbers</span></div>
              <div></div>
              <div class="pl-px"><span data-w="330">3- Enter  number 2 edit contacts  if you want to edit</span></div>
              <div></div>
              <div></div>
              <div class="pl-px"><span data-w="182">4- to remove enter number 3</span></div>
              <div class="pl-[5px]"><span data-w="327">then write  the name you want to remove from data</span></div>
              <div></div>
              <div class="pl-[4px]"><mark class="w-[251px] pl-px"><span data-w="239">enter the name you want to delete :</span></mark></div>
              <div></div>
              <div class="pl-[5px]"><span>if</span></div>
            </div>
          </article>
          <div class="ml-auto mt-[63px] w-[7px] h-[286px] bg-[#f4926c]"></div>
        </div>
      </div>
      <!-- Sidebar -->
      <div class="w-[7px] border-x border-t border-[#a5a39f] flex flex-col items-center">
        <div class="mt-[257px] -mx-px w-[7px] h-[73px] bg-[#929089] flex items-center justify-center shrink-0"><svg class="w-[5px] h-[9px]" viewBox="0 0 5 9"><path d="M0 0l5 4.500L0 9z" fill="#fff"/></svg></div>
      </div>
      <aside class="w-10 border-t border-[#a5a39f] border-l border-l-white flex flex-col items-center pr-[2px]">
        <svg class="mt-[15px] w-[10px] h-[10px]" viewBox="0 0 10 10"><path d="M0 1h6M0 3.500h6M0 6h6" stroke="#222840" stroke-width="1.200"/><path d="M4 6.500h6L7 9.500z" fill="#111"/></svg>
        <div class="mt-[13px] w-[22px] h-px bg-[#d9d8d6]"></div>
        <div class="mt-[3px] w-8 h-8 rounded-[3px] border border-[#b5b3b0] flex items-center justify-center"><svg class="w-6 h-6" viewBox="0 0 24 24"><path d="M1.500 5.500q1 6 6 5.500l7 7q0 5 5.500 5l-2-3 2-2 3 2q1-5-5-6l-7-7Q11 2 5.500 1.500l2 3.500-2 2.500z" fill="#ececea" stroke="#7d7d7b" stroke-width="1.200"/></svg></div>
        <svg class="mt-[7px] w-6 h-6" viewBox="0 0 24 24"><path d="M4.500 1.500h12q4 2 4 5v15h-16z" fill="#fff" stroke="#8f8f8d" stroke-width="1.200"/><path d="M15.500 2q0 4 5 5" fill="#ddd" stroke="#999"/></svg>
        <svg class="mt-[12px] w-6 h-6" viewBox="0 0 24 24"><path d="M5 1h17v5h-2l-1-2.500h-3.500V19h2v2h-8v-2h2V3.500H8L7 6H5z" fill="#54585a"/><path d="M1.500 6v16h19z" fill="#6cbf3a" stroke="#2c7d0c" stroke-width="1.200"/><path d="M5 14v5h6z" fill="#e5f6da" stroke="#2c7d0c"/></svg>
        <svg class="mt-[9px] w-6 h-6" viewBox="0 0 24 24"><path d="M8 6l4-4 4 4" fill="none" stroke="#555"/><path d="M2 6.500h20v13H2z" fill="url(#sunset)" stroke="#b8771c" stroke-width="2.200"/><path d="M15 18.500q1-5-2-7.500m2 3q0-3 5-4m-5 4l2-5" fill="none" stroke="#33230a" stroke-width="1.200"/><path d="M.8 5.300h22.400v15.400H.8z" fill="none" stroke="#6b430a" stroke-width=".7"/></svg>
        <svg class="mt-3 w-6 h-6" viewBox="0 0 24 24"><circle cx="12" cy="12" r="9.500" fill="#f3f3f3" stroke="#777775" stroke-width="2.600"/><circle cx="12" cy="12" r="9.500" fill="none" stroke="#c5c5c3"/><path d="M7 7l7 3-3 3.500z" fill="#da2530"/><path d="M17 17l-6-3.500 3-3.500z" fill="#33529a"/></svg>
      </aside>
    </div>

    <!-- Status bar -->
    <footer class="h-[21px] shrink-0 border-t border-[#a9a7a3] flex items-center text-xs leading-none whitespace-pre [&>b]:w-px [&>b]:h-4 [&>b]:bg-[#8f8d89] [&>b]:shrink-0 [&>*]:shrink-0">
      <span class="ml-[10px] w-[62px]" data-w="62">Page 1 of 1</span><b class="ml-[79px]"></b>
      <span class="ml-2 w-[145px]" data-w="145">137 words, 824 characters</span><b class="ml-[130px]"></b>
      <span class="ml-2 w-[72px]" data-w="72">Default Style</span><b class="ml-[87px]"></b>
      <span class="ml-[49px] w-[72px]" data-w="72">English (USA)</span><b class="ml-[46px]"></b>
      <b class="ml-[67px]"></b>
      <svg class="ml-[9px] w-3 h-[11px]" viewBox="0 0 12 11"><path d="M0 2h8v7H0z" fill="#8e8c88"/><path d="M8.500.5h3M8.500 10.500h3M10.500.5v10" stroke="#8e8c88"/></svg>
      <b class="ml-[7px]"></b>
      <svg class="ml-[10px] w-3 h-3" viewBox="0 0 12 12"><path d="M7 .5H.500v11h9V9" fill="none" stroke="#8e8c88"/><path d="M8.500 2v6M6 3.500l5 3m0-3l-5 3" stroke="#c01020" stroke-width="1.300"/></svg>
      <b class="ml-[6px]"></b><b class="ml-7"></b><b class="ml-[104px]"></b>
      <svg class="ml-3 w-[54px] h-[11px]" viewBox="0 0 54 11" fill="none" stroke="#8e8c88" stroke-width="1.200"><path d="M.6.6h5l2.500 2.500v7.300H.6zM5 .6v3h3" stroke="#444"/><path d="M14.600.6h5l2.500 2.500v7.300h-7.500zM19 .6v3h3M24.600.6h5l2.500 2.500v7.300h-7.500zM29 .6v3h3"/><path d="M46 10.400h-7.400V3.100L41 .6h5zM46 10.400h7.400V3.100L51 .6h-5zM41 .6v3h-2.500M51 .6v3h2.500"/></svg>
      <b class="ml-[9px]"></b>
      <svg class="ml-[10px] w-[126px] h-[14px]" viewBox="0 0 126 14"><path d="M0 7h8M121 3v8M117 7h8" stroke="#7f7d79" stroke-width="1.800"/><path d="M14 7h97" stroke="#a9a7a3" stroke-width="1.800"/><path d="M30 2v10" stroke="#a9a7a3" stroke-width="1.600"/><circle cx="62" cy="7" r="3.800" fill="#fff" stroke="#8e8c88"/></svg>
      <b class="ml-[6px]"></b>
      <span class="ml-[7px] w-[31px]" data-w="31">100%</span>
    </footer>
  </main>
</div>

<script>
  // Ruler marks: 96 px to the inch, zero at the left page margin
  const ruler = document.getElementById('ruler');
  let marks = '';
  for (let k = -6; k <= 59; k++) {
    const x = 76.5 + k * 12 - (k > 0 ? k * 0.02 : 0);
    if (k === 0 || k === 54) continue;
    if (k > 0 && k % 8 === 0) {
      marks += `<text x="${x}" y="13" text-anchor="middle" fill="#8f8d89">${k / 8}</text>`;
    } else {
      const h = k % 4 === 0 ? 3 : 1.5;
      marks += `<path d="M${x} ${9 - h}v${h * 2}" stroke="#a3a19d"/>`;
    }
  }
  for (let t = 1; t <= 13; t++) {
    const x = Math.round(76 + t * 47.2) + .5;
    marks += `<path d="M${x} 14v3.500M${x - 2.500} 17.500h5" stroke="#8f8d89"/>`;
  }
  marks += '<path d="M72.500 1.500h8v2.500l-4 4.500-4-4.500zM76.500 8.500l4 4.500v4.500h-8V13zM719.500 10.500l4 3.500v3.500h-8V14z" fill="#fff" stroke="#7f7d79"/>';
  ruler.innerHTML += marks;

  // Track each label so that it fills its column exactly
  function fitLabels() {
    for (const el of document.querySelectorAll('[data-w]')) {
      el.style.letterSpacing = '0px';
      const range = document.createRange();
      range.selectNodeContents(el);
      const natural = range.getBoundingClientRect().width;
      el.style.letterSpacing = (el.dataset.w - natural) / el.textContent.length + 'px';
    }
  }
  fitLabels();
  window.addEventListener('load', () => { fitLabels(); requestAnimationFrame(fitLabels); });
  document.fonts.ready.then(fitLabels);
</script>
</body>
</html>
